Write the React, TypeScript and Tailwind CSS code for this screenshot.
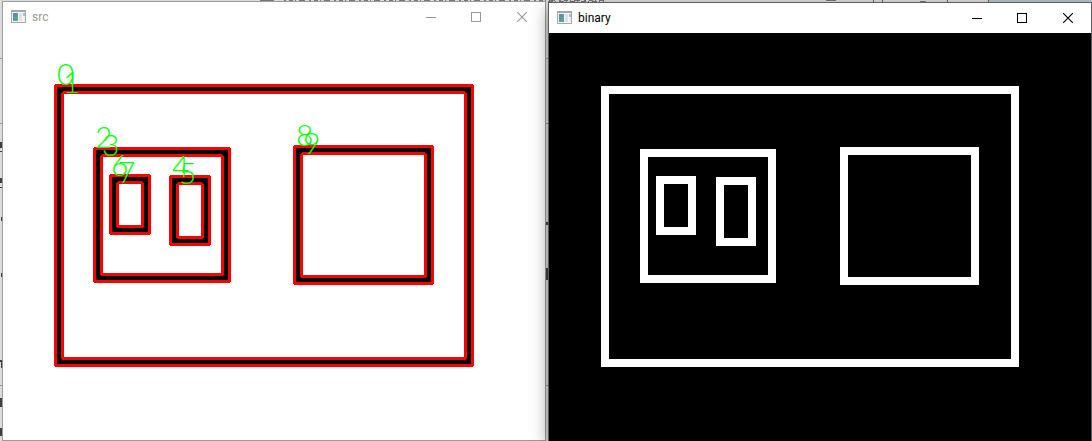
const contours = [
  { x: 52, y: 53, w: 418, h: 281 },
  { x: 91, y: 116, w: 136, h: 134 },
  { x: 167, y: 144, w: 40, h: 69 },
  { x: 107, y: 143, w: 40, h: 59 },
  { x: 291, y: 114, w: 139, h: 138 },
];

const labels = [
  { n: 0, x: 54, y: 53 },
  { n: 1, x: 60, y: 61 },
  { n: 2, x: 92, y: 116 },
  { n: 3, x: 99, y: 124 },
  { n: 4, x: 169, y: 145 },
  { n: 5, x: 176, y: 152 },
  { n: 6, x: 108, y: 144 },
  { n: 7, x: 115, y: 151 },
  { n: 8, x: 293, y: 114 },
  { n: 9, x: 300, y: 122 },
];

function AppIcon() {
  return (
    <svg width="16" height="16" viewBox="0 0 16 16" shapeRendering="crispEdges" aria-hidden="true">
      <defs>
        <linearGradient id="pane" x1="0" y1="0" x2="1" y2="1">
          <stop offset="0" stopColor="#5a84b8" />
          <stop offset="1" stopColor="#5cb07c" />
        </linearGradient>
      </defs>
      <rect x="0.5" y="1.5" width="14" height="12" fill="#f6f6f6" stroke="#a3a8ae" />
      <path d="M0 2.5h15" stroke="#a3a8ae" />
      <rect x="2" y="4" width="5" height="8" fill="url(#pane)" />
      <rect x="8" y="4" width="3" height="8" fill="#dfe1e4" />
      <rect x="12" y="4" width="2" height="3" fill="#9fc3cf" />
      <rect x="12" y="8" width="2" height="4" fill="#eeeeee" />
    </svg>
  );
}

function TitleBar({ title, active }: { title: string; active: boolean }) {
  return (
    <header
      className={`flex h-[30px] items-center bg-white pl-2 ${active ? "text-black" : "text-[#999999]"}`}
    >
      <AppIcon />
      <h1 className="ml-[5px] flex-1 font-['Roboto',sans-serif] text-[12px] leading-4">{title}</h1>
      <button type="button" aria-label="Minimize" className="flex h-full w-[45px] items-center justify-center">
        <svg width="10" height="10" shapeRendering="crispEdges">
          <path d="M0 5.5h10" stroke="currentColor" />
        </svg>
      </button>
      <button type="button" aria-label="Maximize" className="flex h-full w-[46px] items-center justify-center">
        <svg width="10" height="10" shapeRendering="crispEdges">
          <rect x="0.5" y="0.5" width="9" height="9" fill="none" stroke="currentColor" />
        </svg>
      </button>
      <button type="button" aria-label="Close" className="flex h-full w-[46px] items-center justify-center">
        <svg width="10" height="10">
          <path d="M0 0l10 10M10 0L0 10" stroke="currentColor" strokeWidth="1.1" />
        </svg>
      </button>
    </header>
  );
}

function SourceCanvas() {
  return (
    <svg viewBox="0 0 542 408" className="block h-auto w-full bg-white" role="img" aria-label="src">
      <g shapeRendering="crispEdges" fill="none">
        {contours.map(({ x, y, w, h }) => (
          <g key={`${x}-${y}`}>
            <rect x={x + 4} y={y + 4} width={w - 8} height={h - 8} stroke="#000" strokeWidth="8" />
            <g stroke="#f00" strokeWidth="3" strokeLinejoin="round">
              <rect x={x + 0.5} y={y + 0.5} width={w - 1} height={h - 1} rx="1" />
              <rect x={x + 7.5} y={y + 7.5} width={w - 15} height={h - 15} rx="2" />
            </g>
          </g>
        ))}
      </g>
      <g fill="#0f0" className="font-['Lato',sans-serif] text-[30px] font-light">
        {labels.map(({ n, x, y }) => (
          <text key={n} x={x} y={y}>
            {n}
          </text>
        ))}
      </g>
    </svg>
  );
}

function BinaryCanvas() {
  return (
    <svg viewBox="0 0 542 408" className="block h-auto w-full bg-black" role="img" aria-label="binary">
      <g fill="none" stroke="#fff" strokeWidth="8" shapeRendering="crispEdges">
        {contours.map(({ x, y, w, h }) => (
          <rect key={`${x}-${y}`} x={x + 4} y={y + 4} width={w - 8} height={h - 8} />
        ))}
      </g>
    </svg>
  );
}

function Backdrop() {
  return (
    <svg className="absolute inset-0 h-full w-full" shapeRendering="crispEdges" aria-hidden="true">
      <g stroke="#9a9a9a">
        <path d="M0 58.5h548M0 123.5h548M0 385.5h548" />
        <path d="M873.5 0v2M882.5 0v2M947.5 0v2M988.5 0v2" stroke="#666666" />
      </g>
      <g stroke="#777777" fill="none">
        <path d="M260 0.5h14M826 0.5h10M920 1.5h6" />
        <path d="M284 0.5h320" strokeDasharray="2 3 4 2 1 3 6 4" />
        <path d="M544 1.5h60" strokeDasharray="1 3 5 2" />
      </g>
      <rect x="989" width="103" height="2" fill="#b4c3d0" />
      <g fill="#3c4048">
        <path d="M0 142h2v6h-2zM0 151h2v1h-2zM0 178h2v5h-2zM0 187h2v1h-2zM1 217h1v4h-1zM1 273h1v4h-1zM0 360h2v2h-2zM1 362h1v6h-1zM0 398h2v9h-2zM0 428h2v8h-2z" />
        <path d="M546 222h2v3h-2zM546 268h2v12h-2z" />
      </g>
    </svg>
  );
}

export default function App() {
  return (
    <main className="relative flex min-h-screen items-start gap-[2px] overflow-hidden bg-[#dcdcdc] pl-[2px]">
      <Backdrop />
      <section className="relative mt-px min-w-0 flex-1 border border-[#9b9b9b] bg-white">
        <TitleBar title="src" active={false} />
        <SourceCanvas />
      </section>
      <section className="relative z-10 mt-[2px] min-w-0 flex-1 border border-b-0 border-[#5c5f60] bg-black shadow-[0_6px_16px_rgba(0,0,0,0.4)]">
        <TitleBar title="binary" active />
        <BinaryCanvas />
      </section>
    </main>
  );
}
